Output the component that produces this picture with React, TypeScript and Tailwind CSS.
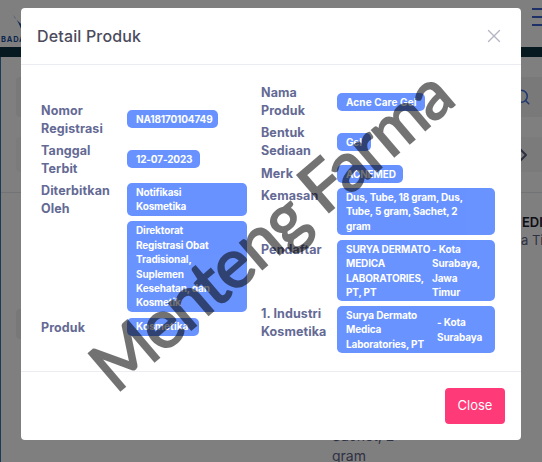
import React from 'react';
import { Search, ChevronRight, X } from 'lucide-react';

const font = { fontFamily: '"Inter", "Noto Sans", sans-serif' };

const Badge = ({ children, className = '' }: { children: React.ReactNode; className?: string }) => (
    <div className={`bg-[#6993ff] text-white rounded-[5px] px-[9px] py-[1.8px] text-[10px] leading-[14.4px] font-bold tracking-[-0.15px] whitespace-nowrap ${className}`}>
        {children}
    </div>
);

const Label = ({ children, className = '' }: { children: React.ReactNode; className?: string }) => (
    <div className={`text-[#646a94] text-[12.5px] leading-[18px] font-bold tracking-[0.1px] translate-y-[1px] ${className}`}>{children}</div>
);

const BackPage = () => (
    <div className="w-[542px] h-[462px] overflow-hidden bg-white">
        {/* top bar */}
        <div className="h-[47px] flex justify-between">
            <div className="pl-[1px] pt-[3px] flex flex-col w-[40px]">
                <svg width="20" height="32" viewBox="0 0 20 32" className="ml-[10px]">
                    <path d="M2 12 C6 16 10 24 12 32 C14 30 16 28 20 26 C14 24 6 19 2 12Z" fill="#1a4fa0" />
                </svg>
                <div className="text-[7.5px] leading-[9px] font-bold tracking-[0.8px] text-[#1a4fa0]">BADAN</div>
            </div>
            <div className="flex flex-col gap-[6px] pt-[8px] w-[10px]">
                <div className="h-[2px] bg-[#3f5fd0]" />
                <div className="h-[2px] bg-[#3f5fd0]" />
                <div className="h-[2px] bg-[#3f5fd0]" />
            </div>
        </div>
        <div className="h-[10px] bg-[#0c3040]" />
        <div className="border-l-[1px] border-[#347aaa] h-[405px]">
            <div className="h-[20px]" />
            <div className="ml-[15px] h-[40px] bg-[#f3f3f3] rounded-l flex justify-end items-center pr-[11px]">
                <Search size={18} className="text-[#3f6fd8]" />
            </div>
            <div className="h-[20px]" />
            <div className="ml-[15px] h-[35px] bg-[#f7f7f7] rounded-l flex justify-end items-center pr-[7px]">
                <ChevronRight size={24} className="text-[#5a6080]" />
            </div>
            <div className="h-[20px]" />
            <div className="border-t border-[#e4e6ef]" />
            <div className="flex justify-end pt-[20px] text-[13px] font-semibold text-[#1a1a2e] leading-[18px]">
                <span className="w-[20px] overflow-hidden">EDIKA</span>
            </div>
            <div className="flex justify-end text-[13px] text-[#5f6488] leading-[18px]">
                <span className="w-[21px] overflow-hidden whitespace-nowrap">a Timur</span>
            </div>
            <div className="h-[60px]" />
            <div className="ml-[15px] w-[20px] h-[30px] bg-[#f0f0f0] rounded-l" />
            <div className="pl-[331px] pt-[87px] text-[14px] leading-[20px] text-[#5f6488]">
                <div>Sachet, 2</div>
                <div>gram</div>
            </div>
        </div>
    </div>
);

const App: React.FC = () => {
    return (
        <div className="relative w-[542px] h-[462px] overflow-hidden" style={font}>
            <BackPage />
            <div className="absolute inset-0 bg-black/50 pt-[8px] pl-[21px]">
                <div className="relative w-[500px] h-[432px] bg-white rounded-[4px] overflow-hidden flex flex-col">
                    <div className="h-[57px] flex items-center justify-between pl-[16px] pr-[16px] border-b border-[#ebedf3]">
                        <h5 className="text-[16px] font-medium tracking-[0.15px] text-[#4b4b5c]">Detail Produk</h5>
                        <X size={22} strokeWidth={1.5} className="text-[#b5b5c3]" />
                    </div>

                    <div className="h-[307px] flex items-center pl-[20px] border-b border-[#ebedf3]">
                        {/* left column */}
                        <div className="w-[220px] mt-[1px] flex flex-col gap-[4px]">
                            <div className="flex items-center">
                                <Label className="w-[86px]">Nomor<br />Registrasi</Label>
                                <Badge className="w-[91px] tracking-[-0.4px]">NA18170104749</Badge>
                            </div>
                            <div className="flex items-center">
                                <Label className="w-[86px]">Tanggal<br />Terbit</Label>
                                <Badge className="w-[73px]">12-07-2023</Badge>
                            </div>
                            <div className="flex items-center">
                                <Label className="w-[86px]">Diterbitkan<br />Oleh</Label>
                                <Badge className="w-[120px]">Notifikasi<br />Kosmetika</Badge>
                            </div>
                            <div className="flex items-center">
                                <div className="w-[86px]" />
                                <Badge className="w-[120px]">Direktorat<br />Registrasi Obat<br />Tradisional,<br />Suplemen<br />Kesehatan, dan<br />Kosmetik</Badge>
                            </div>
                            <div className="flex items-center mt-[2px]">
                                <Label className="w-[86px]">Produk</Label>
                                <Badge className="w-[72px] tracking-[0.1px]">Kosmetika</Badge>
                            </div>
                        </div>

                        {/* right column */}
                        <div className="flex flex-col gap-[4px]">
                            <div className="flex items-center">
                                <Label className="w-[76px]">Nama<br />Produk</Label>
                                <Badge className="mt-[2px] w-[88px] tracking-[0.1px]">Acne Care Gel</Badge>
                            </div>
                            <div className="flex items-center">
                                <Label className="w-[76px]">Bentuk<br />Sediaan</Label>
                                <Badge className="mt-[2px] w-[34px]">Gel</Badge>
                            </div>
                            <div className="flex items-start mt-[1px]">
                                <Label className="w-[76px]">Merk</Label>
                                <Badge className="mt-[1px] w-[66px] tracking-[-0.3px]">ACNEMED</Badge>
                            </div>
                            <div className="flex items-start mt-[1px]">
                                <Label className="w-[76px] -mt-[2px]">Kemasan</Label>
                                <Badge className="w-[158px]">Dus, Tube, 18 gram, Dus,<br />Tube, 5 gram, Sachet, 2<br />gram</Badge>
                            </div>
                            <div className="flex items-start mt-[1px]">
                                <Label className="w-[76px]">Pendaftar</Label>
                                <Badge className="w-[158px] flex gap-[4px]">
                                    <div className="w-[82px]">SURYA DERMATO<br />MEDICA<br />LABORATORIES,<br />PT, PT</div>
                                    <div className="flex-1">- Kota<br />Surabaya,<br />Jawa<br />Timur</div>
                                </Badge>
                            </div>
                            <div className="flex items-start mt-[1px]">
                                <Label className="w-[76px] -mt-[2px]">1. Industri<br />Kosmetika</Label>
                                <Badge className="w-[158px] flex items-center gap-[9px]">
                                    <div className="w-[82px]">Surya Dermato<br />Medica<br />Laboratories, PT</div>
                                    <div className="flex-1">- Kota<br />Surabaya</div>
                                </Badge>
                            </div>
                        </div>
                    </div>

                    <div className="flex-1 flex items-center justify-end pr-[16px]">
                        <button className="w-[60px] h-[36px] bg-[#ff3a78] text-white text-[13px] rounded-[4px]">Close</button>
                    </div>

                    {/* watermark */}
                    <div className="absolute left-[24px] top-[187px] rotate-[-40.5deg] text-[68px] leading-none font-normal tracking-[-1.5px] text-black opacity-55 [-webkit-text-stroke:2px_black] whitespace-nowrap pointer-events-none [font-family:Lato,sans-serif]">
                        Menteng Farma
                    </div>
                </div>
            </div>
        </div>
    );
};

export default App;
